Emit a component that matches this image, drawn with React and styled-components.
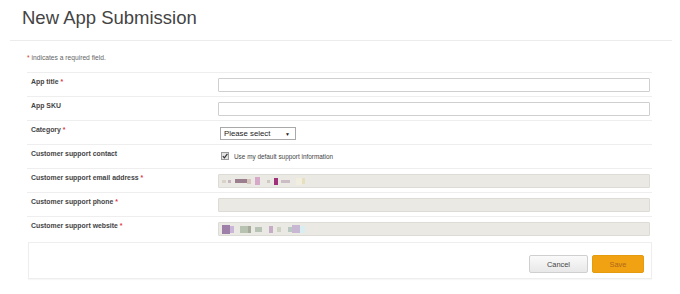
import React from "react";
import styled, { createGlobalStyle } from "styled-components";

const GlobalStyle = createGlobalStyle`
  html, body {
    margin: 0;
    padding: 0;
    background: #fff;
  }
  body {
    font-family: "Liberation Sans", Arial, sans-serif;
    color: #333;
  }
`;

const Page = styled.div`
  width: 680px;
  height: 294px;
  overflow: hidden;
  background: #fff;
`;

const Header = styled.header`
  height: 40px;
  padding: 7px 0 0 22px;
  box-sizing: border-box;
  h1 {
    margin: 0;
    font-size: 18.5px;
    line-height: 22px;
    font-weight: normal;
    color: #444;
  }
`;

const Content = styled.main`
  margin: 0 8px 0 10px;
  border-top: 1px solid #ececec;
  padding: 0 20px 0 17px;
`;

const Note = styled.p`
  margin: 0;
  height: 31px;
  padding-top: 13px;
  box-sizing: border-box;
  font-size: 6.7px;
  line-height: 8px;
  color: #666;
`;

const Star = styled.span`
  color: #e03a3a;
`;

const Row = styled.div`
  display: grid;
  grid-template-columns: 187px 1fr;
  height: 24px;
  box-sizing: border-box;
  border-top: 1px solid #eee;
  padding: 0 2px 0 4px;
`;

const Label = styled.label`
  padding-top: 5px;
  font-size: 6.9px;
  line-height: 8px;
  font-weight: bold;
  color: #444;
`;

const Field = styled.div`
  padding-top: ${(p) => p.$top || 5}px;
`;

const TextInput = styled.div`
  height: 14px;
  box-sizing: border-box;
  border: 1px solid ${(p) => (p.$disabled ? "#dcdbd6" : "#cfcfcf")};
  background: ${(p) => (p.$disabled ? "#eae9e4" : "#fff")};
  border-radius: 1px;
  display: flex;
  align-items: center;
  padding-left: 3px;
`;

const Block = styled.span`
  display: inline-block;
  width: ${(p) => p.$w}px;
  height: ${(p) => p.$h || 5}px;
  margin-left: ${(p) => p.$gap || 0}px;
  background: ${(p) => p.$c};
  filter: blur(0.4px);
`;

const Select = styled.div`
  width: 76px;
  height: 13px;
  box-sizing: border-box;
  margin-left: 2px;
  border: 1px solid #a9a9a9;
  background: #fff;
  display: flex;
  align-items: center;
  justify-content: space-between;
  padding: 0 5px 0 3px;
  font-size: 7.8px;
  color: #222;
  span {
    font-size: 5px;
  }
`;

const Check = styled.label`
  display: flex;
  align-items: center;
  gap: 5px;
  margin-left: 3px;
  font-size: 6.4px;
  color: #444;
`;

const Box = styled.span`
  width: 6px;
  height: 6px;
  border: 1px solid #9a9a9a;
  background: #e4e4e4;
  display: flex;
  align-items: center;
  justify-content: center;
`;

const Footer = styled.div`
  margin: 2px 0 0 1px;
  height: 37px;
  box-sizing: border-box;
  border: 1px solid #eeeeee;
  box-shadow: 0 1px 1px rgba(0, 0, 0, 0.03);
  display: flex;
  justify-content: flex-end;
  align-items: flex-start;
  gap: 4px;
  padding: 12px 7px 0 0;
`;

const Button = styled.button`
  height: 18px;
  width: ${(p) => (p.$primary ? 52 : 59)}px;
  padding: 0;
  border-radius: 2px;
  font-family: inherit;
  font-size: 7.4px;
  border: 1px solid ${(p) => (p.$primary ? "#e49b0d" : "#cfcfcf")};
  background: ${(p) =>
    p.$primary ? "#f1a212" : "linear-gradient(#fafafa, #e8e8e8)"};
  color: ${(p) => (p.$primary ? "#b0681a" : "#444")};
`;

const emailBlocks = [
  { w: 4, c: "#d8d2c8", h: 3 },
  { w: 3, c: "#c9b5bf", h: 3, gap: 2 },
  { w: 12, c: "#9c7f8f", h: 4, gap: 4 },
  { w: 4, c: "#d6c6bc", h: 5 },
  { w: 5, c: "#d7a9c9", h: 8, gap: 4 },
  { w: 3, c: "#cfc9c2", h: 3, gap: 7 },
  { w: 4, c: "#a0307a", h: 7, gap: 4 },
  { w: 9, c: "#cbbcc6", h: 3, gap: 3 },
  { w: 6, c: "#f2eedf", h: 7, gap: 6 },
  { w: 3, c: "#e6e0c0", h: 6 },
];

const webBlocks = [
  { w: 8, c: "#9d7fa8", h: 9 },
  { w: 4, c: "#c9b6d8", h: 7 },
  { w: 8, c: "#b8c2b0", h: 7, gap: 6 },
  { w: 3, c: "#a5ab9a", h: 7 },
  { w: 7, c: "#b7c4b5", h: 5, gap: 4 },
  { w: 4, c: "#c7acc7", h: 7, gap: 7 },
  { w: 4, c: "#cfd3c6", h: 5, gap: 4 },
  { w: 4, c: "#b8c7c2", h: 5, gap: 7 },
  { w: 8, c: "#c8b7d3", h: 8 },
  { w: 5, c: "#d8eef0", h: 7 },
];

const Redacted = ({ blocks }) =>
  blocks.map((b, i) => (
    <Block key={i} $w={b.w} $h={b.h} $c={b.c} $gap={b.gap} />
  ));

const Req = () => <Star> *</Star>;

export default function App() {
  return (
    <Page>
      <GlobalStyle />
      <Header>
        <h1>New App Submission</h1>
      </Header>
      <Content>
        <Note>
          <Star>*</Star> indicates a required field.
        </Note>
        <Row>
          <Label>
            App title<Req />
          </Label>
          <Field>
            <TextInput />
          </Field>
        </Row>
        <Row>
          <Label>App SKU</Label>
          <Field>
            <TextInput />
          </Field>
        </Row>
        <Row>
          <Label>
            Category<Req />
          </Label>
          <Field $top={6}>
            <Select>
              Please select <span>▼</span>
            </Select>
          </Field>
        </Row>
        <Row>
          <Label>Customer support contact</Label>
          <Field $top={7}>
            <Check>
              <Box>
                <svg width="6" height="6" viewBox="0 0 6 6">
                  <path
                    d="M0.8 3.2 L2.4 4.8 L5.4 0.8"
                    fill="none"
                    stroke="#333"
                    strokeWidth="1.2"
                  />
                </svg>
              </Box>
              Use my default support information
            </Check>
          </Field>
        </Row>
        <Row>
          <Label>
            Customer support email address<Req />
          </Label>
          <Field>
            <TextInput $disabled>
              <Redacted blocks={emailBlocks} />
            </TextInput>
          </Field>
        </Row>
        <Row>
          <Label>
            Customer support phone<Req />
          </Label>
          <Field>
            <TextInput $disabled />
          </Field>
        </Row>
        <Row>
          <Label>
            Customer support website<Req />
          </Label>
          <Field>
            <TextInput $disabled>
              <Redacted blocks={webBlocks} />
            </TextInput>
          </Field>
        </Row>
        <Footer>
          <Button>Cancel</Button>
          <Button $primary>Save</Button>
        </Footer>
      </Content>
    </Page>
  );
}
